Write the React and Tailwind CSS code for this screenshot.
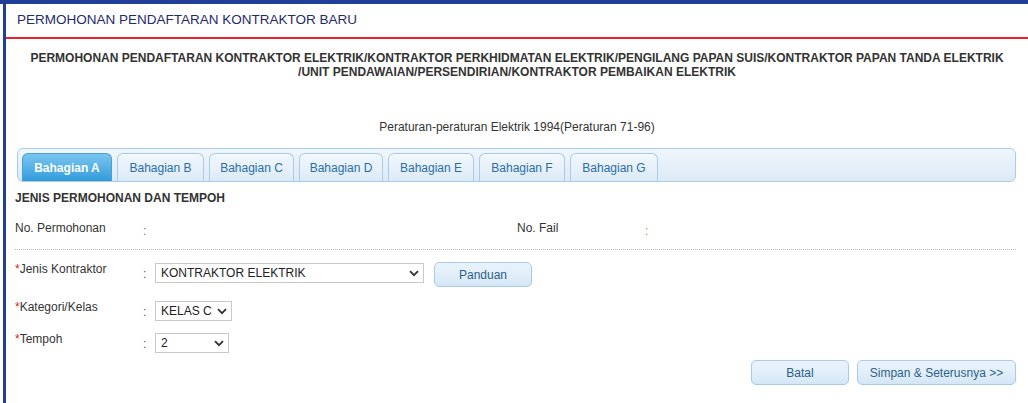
import React from "react";

const Chevron = () => (
  <svg width="10" height="7" viewBox="0 0 10 7" className="shrink-0">
    <path d="M1 1.2 L5 5.2 L9 1.2" fill="none" stroke="#333" strokeWidth="1.8" />
  </svg>
);

const Select = ({ text, w }) => (
  <div
    className={`flex items-center justify-between h-[20px] border border-[#c9c9c9] bg-white pl-[5px] pr-[4px] text-[12px] text-[#222] ${w}`}
  >
    <span>{text}</span>
    <Chevron />
  </div>
);

const Btn = ({ children, w }) => (
  <div
    className={`flex items-center justify-center h-[25px] rounded-[5px] border border-[#a9cbe7] bg-gradient-to-b from-[#e9f3fc] via-[#e2eff9] to-[#d3e6f6] text-[12px] text-[#2c5f8d] ${w}`}
  >
    {children}
  </div>
);

const tabs = [
  ["Bahagian A", "w-[90px]"],
  ["Bahagian B", "w-[87px]"],
  ["Bahagian C", "w-[85px]"],
  ["Bahagian D", "w-[84px]"],
  ["Bahagian E", "w-[86px]"],
  ["Bahagian F", "w-[86px]"],
  ["Bahagian G", "w-[88px]"],
];

const Row = ({ label, children, req }) => (
  <div className="flex items-start">
    <div className="w-[128px] text-[12px] text-[#333] leading-[13px]">
      {req && <span className="text-[#e02020]">*</span>}
      {label}
    </div>
    <div className="w-[12px] text-[12px] text-[#555] leading-[14px] pt-[4px]">:</div>
    {children}
  </div>
);

export default function App() {
  return (
    <div
      className="w-[1028px] h-[403px] bg-white border-t-4 border-[#213f99] pl-[3px] overflow-hidden"
      style={{ fontFamily: '"Liberation Sans", Arial, sans-serif' }}
    >
      <div className="h-full border-l-[3px] border-[#213f99] flex flex-col">
        <div className="h-[33px] flex items-center pl-[11px] text-[13.5px] text-[#1f2a6b]">
          PERMOHONAN PENDAFTARAN KONTRAKTOR BARU
        </div>
        <div className="h-[2px] bg-[#e8202a]" />
        <div className="mt-[12px] text-center text-[12px] leading-[14px] font-bold text-[#333]">
          PERMOHONAN PENDAFTARAN KONTRAKTOR ELEKTRIK/KONTRAKTOR PERKHIDMATAN ELEKTRIK/PENGILANG PAPAN SUIS/KONTRAKTOR PAPAN TANDA ELEKTRIK
          <br />
          /UNIT PENDAWAIAN/PERSENDIRIAN/KONTRAKTOR PEMBAIKAN ELEKTRIK
        </div>
        <div className="mt-[41px] text-center text-[12px] leading-[14px] text-[#333]">
          Peraturan-peraturan Elektrik 1994(Peraturan 71-96)
        </div>

        <div className="mt-[14px] ml-[11px] mr-[12px] h-[34px] rounded-[6px] border border-[#aacbe8] bg-gradient-to-b from-[#f0f6fc] to-[#dce9f5] flex items-end pl-[4px] gap-[5px]">
          {tabs.map(([t, w], i) =>
            i === 0 ? (
              <div
                key={t}
                className={`${w} h-[28px] rounded-t-[6px] border border-b-0 border-[#4a9fd6] bg-gradient-to-b from-[#79c6ef] to-[#2e9bdc] flex items-center justify-center text-[12px] font-bold text-white`}
              >
                {t}
              </div>
            ) : (
              <div
                key={t}
                className={`${w} h-[28px] rounded-t-[6px] border border-b-0 border-[#aacbe8] bg-gradient-to-b from-[#f2f8fd] to-[#dbeaf7] flex items-center justify-center text-[12px] text-[#2b6ea6]`}
              >
                {t}
              </div>
            )
          )}
        </div>

        <div className="pl-[9px] pr-[12px]">
          <div className="mt-[9px] text-[12px] font-bold text-[#333] leading-[14px]">
            JENIS PERMOHONAN DAN TEMPOH
          </div>
          <div className="mt-[16px] flex h-[28px]">
            <div className="w-[502px] flex">
              <div className="w-[128px] text-[12px] text-[#333] leading-[14px]">No. Permohonan</div>
              <div className="text-[12px] text-[#777] leading-[14px] pt-[3px]">:</div>
            </div>
            <div className="flex">
              <div className="w-[128px] text-[12px] text-[#333] leading-[14px]">No. Fail</div>
              <div className="text-[12px] text-[#c77a1a] leading-[14px] pt-[3px]">:</div>
            </div>
          </div>
          <div className="border-t border-dotted border-[#b5b5b5]" />

          <div className="mt-[13px] flex items-start h-[24px]">
            <Row label="Jenis Kontraktor" req>
              <Select text="KONTRAKTOR ELEKTRIK" w="w-[269px]" />
            </Row>
            <div className="ml-[10px] -mt-[1px]">
              <Btn w="w-[98px]">Panduan</Btn>
            </div>
          </div>
          <div className="mt-[14px]">
            <Row label="Kategori/Kelas" req>
              <Select text="KELAS C" w="w-[77px]" />
            </Row>
          </div>
          <div className="mt-[12px]">
            <Row label="Tempoh" req>
              <Select text="2" w="w-[74px]" />
            </Row>
          </div>

          <div className="mt-[7px] flex justify-end gap-[8px]">
            <Btn w="w-[98px]">Batal</Btn>
            <Btn w="w-[159px]">Simpan &amp; Seterusnya &gt;&gt;</Btn>
          </div>
        </div>
      </div>
    </div>
  );
}
